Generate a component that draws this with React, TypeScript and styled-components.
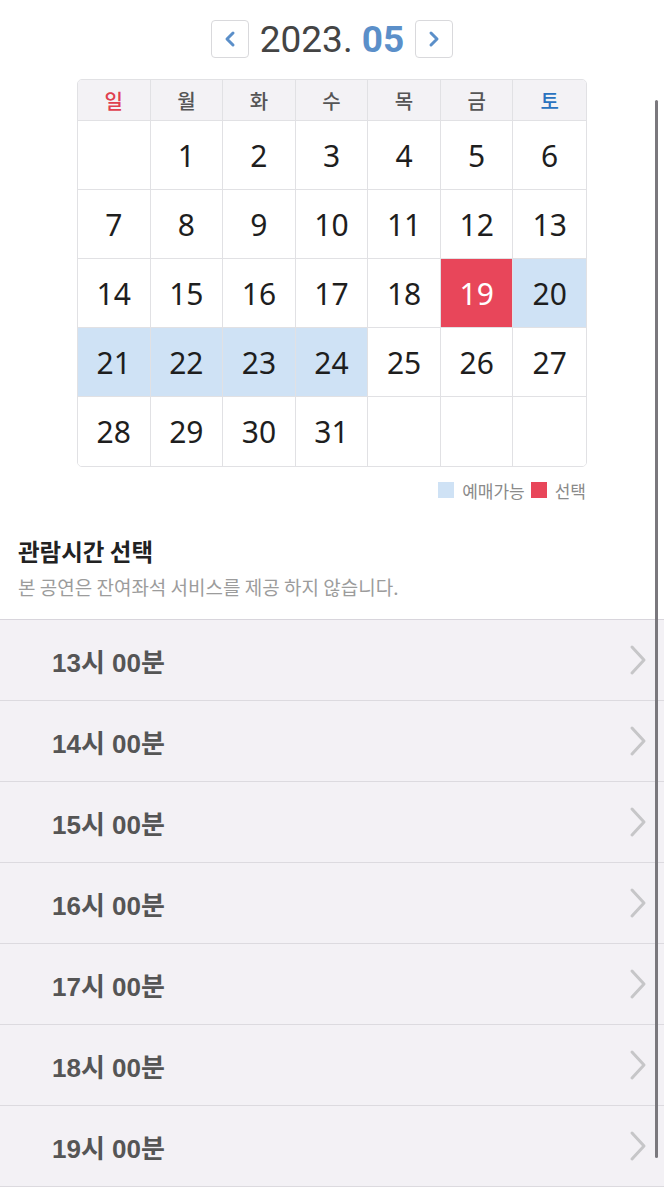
import React from "react";
import styled, { createGlobalStyle } from "styled-components";

const GlobalStyle = createGlobalStyle`
  html, body {
    margin: 0;
    padding: 0;
    background: #ffffff;
  }
  body {
    font-family: Roboto, "Noto Sans", "Noto Sans CJK KR", sans-serif;
    -webkit-font-smoothing: antialiased;
  }
`;

const Page = styled.div`
  position: relative;
  width: 664px;
  min-height: 1200px;
  background: #ffffff;
  overflow: hidden;
`;

const MonthBar = styled.div`
  display: flex;
  align-items: center;
  justify-content: center;
  gap: 11px;
  padding-top: 20px;
  height: 38px;
`;

const NavButton = styled.button`
  display: flex;
  align-items: center;
  justify-content: center;
  width: 38px;
  height: 38px;
  padding: 0;
  border: 1px solid #d9d9dc;
  border-radius: 4px;
  background: #ffffff;
`;

const MonthTitle = styled.div`
  font-family: Roboto, "Noto Sans", sans-serif;
  font-size: 37px;
  color: #444444;
  line-height: 1;
`;

const MonthNum = styled.span`
  color: #5b8fc9;
  font-weight: 700;
`;

const Calendar = styled.div`
  width: 508px;
  margin: 21px auto 0;
  border: 1px solid #e1e1e4;
  border-radius: 5px;
  overflow: hidden;
  display: grid;
  grid-template-columns: repeat(7, 1fr);
  grid-template-rows: 41px repeat(5, 69px);
`;

const WeekCell = styled.div<{ $tone?: "sun" | "sat" }>`
  display: flex;
  align-items: center;
  justify-content: center;
  background: #f3f2f5;
  border-right: 1px solid #e1e1e4;
  border-bottom: 1px solid #e1e1e4;
  font-family: "Noto Sans CJK KR", sans-serif;
  font-size: 20px;
  font-weight: 500;
  color: ${(p) =>
    p.$tone === "sun" ? "#e0404f" : p.$tone === "sat" ? "#2a73bf" : "#555555"};
  &:nth-child(7n) {
    border-right: none;
  }
`;

const DayCell = styled.div<{ $state?: "open" | "picked"; $last?: boolean }>`
  display: flex;
  align-items: center;
  justify-content: center;
  border-right: 1px solid #e1e1e4;
  border-bottom: ${(p) => (p.$last ? "none" : "1px solid #e1e1e4")};
  background: ${(p) =>
    p.$state === "picked" ? "#e8465a" : p.$state === "open" ? "#cfe2f5" : "#ffffff"};
  color: ${(p) => (p.$state === "picked" ? "#ffffff" : "#1e1e1e")};
  font-family: "Noto Sans", Roboto, sans-serif;
  font-size: 30px;
  &:nth-child(7n) {
    border-right: none;
  }
`;

const Legend = styled.div`
  display: flex;
  justify-content: flex-end;
  align-items: center;
  gap: 6px;
  width: 508px;
  height: 24px;
  margin: 11px auto 0;
  font-family: "Noto Sans CJK KR", sans-serif;
  font-size: 17px;
  color: #8a8a8a;
`;

const LegendItem = styled.span`
  display: flex;
  align-items: center;
  gap: 8px;
`;

const Swatch = styled.span<{ $color: string }>`
  display: inline-block;
  width: 16px;
  height: 16px;
  background: ${(p) => p.$color};
`;

const Section = styled.div`
  padding: 33px 18px 0;
`;

const SectionTitle = styled.div`
  font-family: "Noto Sans CJK KR", sans-serif;
  font-size: 23.5px;
  font-weight: 700;
  color: #222222;
  line-height: 32px;
`;

const SectionNote = styled.div`
  margin-top: 7px;
  font-family: "Noto Sans CJK KR", sans-serif;
  font-size: 19px;
  color: #9c9c9c;
  line-height: 26px;
`;

const TimeList = styled.ul`
  list-style: none;
  margin: 19px 0 0;
  padding: 0;
  border-top: 1px solid #d8d5dc;
`;

const TimeRow = styled.li`
  display: flex;
  align-items: center;
  justify-content: space-between;
  height: 80px;
  padding: 0 17px 0 52px;
  background: #f3f1f5;
  border-bottom: 1px solid #dcdadf;
`;

const TimeLabel = styled.span`
  font-family: "Liberation Sans", Arial, "Noto Sans CJK KR", sans-serif;
  font-size: 26px;
  font-weight: 700;
  color: #555555;
`;

const ScrollThumb = styled.div`
  position: absolute;
  top: 100px;
  right: 6px;
  width: 3px;
  height: 1058px;
  border-radius: 2px;
  background: #7a787d;
`;

const NavIcon = ({ dir }: { dir: "l" | "r" }) => (
  <svg width="14" height="18" viewBox="0 0 14 18" fill="none">
    <path
      d={dir === "l" ? "M10 3 L4 9 L10 15" : "M4 3 L10 9 L4 15"}
      stroke="#5b8fc9"
      strokeWidth="3"
      strokeLinecap="round"
      strokeLinejoin="round"
    />
  </svg>
);

const RowChevron = () => (
  <svg width="18" height="32" viewBox="0 0 18 32" fill="none">
    <path
      d="M3 3 L15 16 L3 29"
      stroke="#c6c6c8"
      strokeWidth="3"
      strokeLinecap="round"
      strokeLinejoin="round"
    />
  </svg>
);

const weekDays = ["일", "월", "화", "수", "목", "금", "토"];
const openDays = [20, 21, 22, 23, 24];
const pickedDay = 19;
const times = ["13시 00분", "14시 00분", "15시 00분", "16시 00분", "17시 00분", "18시 00분", "19시 00분"];

const App = () => {
  const cells: (number | null)[] = [null];
  for (let d = 1; d <= 31; d++) cells.push(d);
  while (cells.length < 35) cells.push(null);

  return (
    <Page>
      <GlobalStyle />
      <MonthBar>
        <NavButton aria-label="이전 달">
          <NavIcon dir="l" />
        </NavButton>
        <MonthTitle>
          2023. <MonthNum>05</MonthNum>
        </MonthTitle>
        <NavButton aria-label="다음 달">
          <NavIcon dir="r" />
        </NavButton>
      </MonthBar>

      <Calendar>
        {weekDays.map((w, i) => (
          <WeekCell key={w} $tone={i === 0 ? "sun" : i === 6 ? "sat" : undefined}>
            {w}
          </WeekCell>
        ))}
        {cells.map((d, i) => (
          <DayCell
            key={i}
            $last={i >= 28}
            $state={d === pickedDay ? "picked" : d && openDays.includes(d) ? "open" : undefined}
          >
            {d ?? ""}
          </DayCell>
        ))}
      </Calendar>

      <Legend>
        <LegendItem>
          <Swatch $color="#cfe2f5" />
          예매가능
        </LegendItem>
        <LegendItem>
          <Swatch $color="#e8465a" />
          선택
        </LegendItem>
      </Legend>

      <Section>
        <SectionTitle>관람시간 선택</SectionTitle>
        <SectionNote>본 공연은 잔여좌석 서비스를 제공 하지 않습니다.</SectionNote>
      </Section>

      <TimeList>
        {times.map((t) => (
          <TimeRow key={t}>
            <TimeLabel>{t}</TimeLabel>
            <RowChevron />
          </TimeRow>
        ))}
      </TimeList>

      <ScrollThumb />
    </Page>
  );
};

export default App;
